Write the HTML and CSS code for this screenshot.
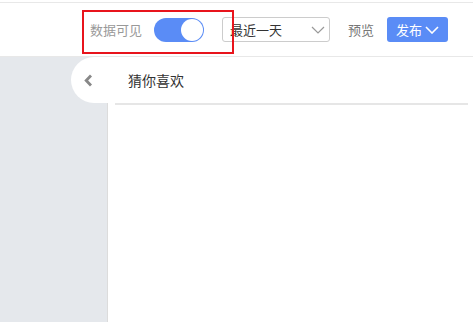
FILE: index.html
```html
<!DOCTYPE html>
<html lang="zh-CN">
<head>
    <meta charset="UTF-8">
    <meta name="viewport" content="width=device-width, initial-scale=1.0">
    <title>页面编辑</title>
    <link rel="stylesheet" href="styles.css">
</head>
<body>
    <div class="header">
        <div class="visible-group">
            <span class="visible-label">数据可见</span>
            <span class="switch"><span class="switch-knob"></span></span>
            <div class="mark-box"></div>
        </div>
        <div class="range-select">
            <span>最近一天</span>
            <svg class="select-arrow" width="14" height="8" viewBox="0 0 14 8"><path d="M1 1 L7 7 L13 1" fill="none" stroke="#999" stroke-width="1.2"/></svg>
        </div>
        <span class="preview-link">预览</span>
        <button class="publish-button">发布
            <svg width="14" height="8" viewBox="0 0 14 8"><path d="M1 1 L7 7 L13 1" fill="none" stroke="#fff" stroke-width="1.6"/></svg>
        </button>
    </div>

    <div class="content">
        <div class="sidebar"></div>
        <div class="collapse-tab">
            <svg width="9" height="13" viewBox="0 0 9 13"><path d="M7 1.5 L2.2 6.5 L7 11.5" fill="none" stroke="#888" stroke-width="2.8"/></svg>
        </div>
        <div class="main">
            <div class="panel-title">猜你喜欢</div>
        </div>
    </div>
</body>
</html>
```

FILE: styles.css
```css
/* Base */
body {
    margin: 0;
    font-family: "Liberation Sans", "Noto Sans CJK SC", sans-serif;
    background-color: #fff;
    height: 322px;
    overflow: hidden;
}

/* Header bar */
.header {
    margin-top: 2px;
    height: 53px;
    border-top: 1px solid #e8e8e8;
    border-bottom: 1px solid #e8e8e8;
    display: flex;
    align-items: center;
    justify-content: flex-end;
    padding-right: 25px;
}

.visible-group {
    position: relative;
    display: flex;
    align-items: center;
}

.visible-label {
    font-size: 13px;
    color: #999;
    margin-right: 12px;
}

.switch {
    width: 50px;
    height: 24px;
    border-radius: 12px;
    background-color: #5a8cf6;
    display: flex;
    align-items: center;
    justify-content: flex-end;
    padding-right: 1px;
    box-sizing: border-box;
}

.switch-knob {
    width: 22px;
    height: 22px;
    border-radius: 50%;
    background-color: #fff;
}

/* Red annotation frame */
.mark-box {
    position: absolute;
    left: -8px;
    top: -8px;
    width: 148px;
    height: 40px;
    border: 2px solid #e8141c;
}

.range-select {
    margin-left: 18px;
    width: 108px;
    height: 25px;
    box-sizing: border-box;
    border: 1px solid #ccc;
    border-radius: 3px;
    display: flex;
    align-items: center;
    justify-content: space-between;
    padding: 0 4px 0 7px;
    font-size: 13px;
    color: #333;
}

.preview-link {
    margin-left: 18px;
    font-size: 13px;
    color: #777;
}

.publish-button {
    margin-left: 13px;
    width: 61px;
    height: 25px;
    border: none;
    border-radius: 3px;
    background-color: #5a8cf6;
    color: #fff;
    font-family: inherit;
    font-size: 13px;
    display: flex;
    align-items: center;
    justify-content: center;
    gap: 3px;
    padding: 0;
}

/* Lower area */
.content {
    position: relative;
    display: flex;
    height: 265px;
}

.sidebar {
    width: 107px;
    background-color: #e5e8ec;
    border-right: 1px solid #dcdcdc;
}

.collapse-tab {
    position: absolute;
    left: 71px;
    top: 0;
    width: 37px;
    height: 46px;
    border-radius: 23px 0 0 23px;
    background-color: #fff;
    display: flex;
    align-items: center;
    justify-content: center;
    padding-right: 2px;
    box-sizing: border-box;
}

.main {
    flex: 1;
    padding: 0 5px 0 7px;
}

.panel-title {
    height: 46px;
    border-bottom: 2px solid #e6e6e6;
    display: flex;
    align-items: center;
    padding-left: 13px;
    font-size: 14px;
    color: #333;
}
```
